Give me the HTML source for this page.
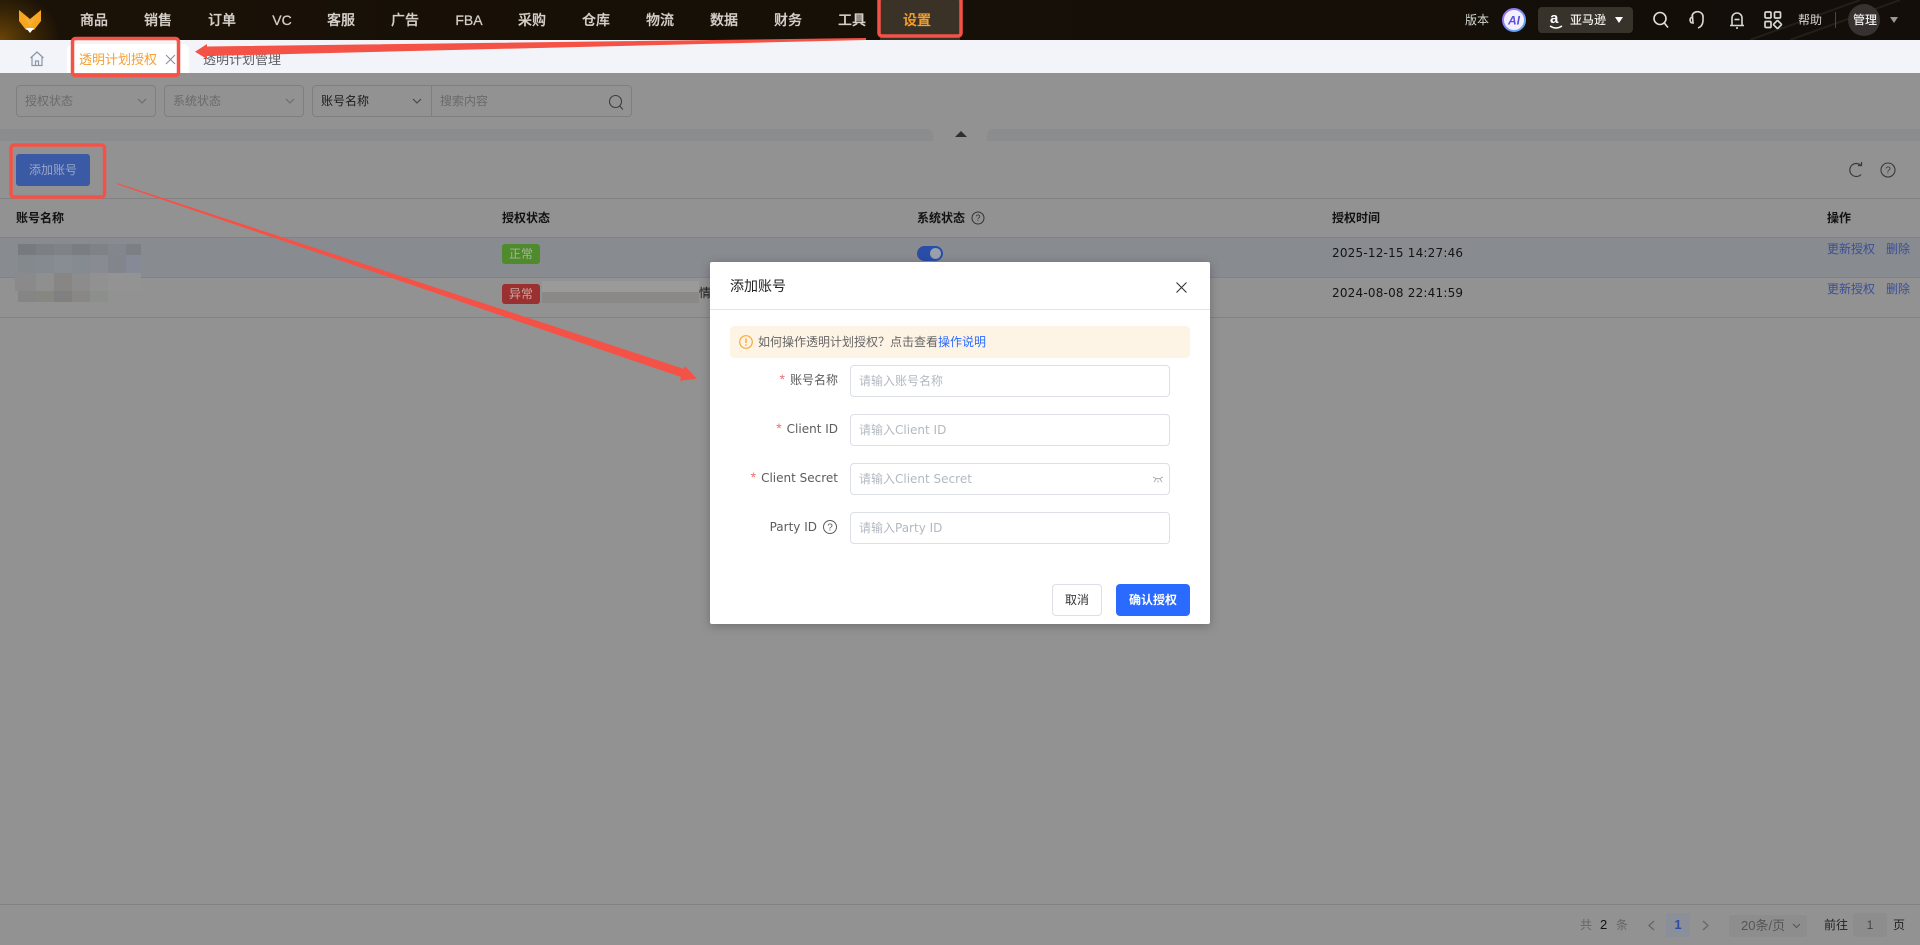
<!DOCTYPE html>
<html lang="zh-CN">
<head>
<meta charset="utf-8">
<title>透明计划授权</title>
<style>
*{box-sizing:border-box;margin:0;padding:0}
html,body{width:1920px;height:945px;overflow:hidden;background:#929292}
body{position:relative;font-family:"Liberation Sans","Noto Sans CJK SC",sans-serif;font-size:12px;color:#222}
.a{position:absolute;white-space:nowrap}
.t{position:absolute;white-space:nowrap;line-height:18px}
#top{left:0;top:0;width:1920px;height:40px;background:radial-gradient(ellipse 60px 50px at 0 40px,#6a4508 0,#3a2606 55%,rgba(23,16,8,0) 100%),linear-gradient(90deg,#1b1207,#171007 30%,#150f08 70%,#130e0a)}
.nav{position:absolute;top:10px;transform:translateX(-50%);font-size:14px;line-height:20px;color:#d4d0c9;font-weight:500;white-space:nowrap;-webkit-text-stroke:.25px currentColor}
.sel{position:absolute;top:85px;height:32px;border:1px solid #7f7f7f;border-radius:4px;background:#929292;line-height:30px;padding-left:8px;color:#6a6a6a}
.th{position:absolute;top:209px;font-weight:700;color:#111;line-height:18px}
.line{position:absolute;left:0;width:1920px;height:1px;background:#828282}
.tag{position:absolute;left:502px;width:38px;height:20px;border-radius:3px;text-align:center;line-height:20px;color:#a7b4a0}
.date{position:absolute;left:1332px;color:#141414;font-family:"DejaVu Sans","Noto Sans CJK SC",sans-serif;font-size:12px;line-height:18px;white-space:nowrap;letter-spacing:.2px}
.link{position:absolute;color:#3a4f98;line-height:18px;white-space:nowrap}
.m{position:absolute;height:18px}
#modal{left:710px;top:262px;width:500px;height:362px;background:#fff;border-radius:2px;box-shadow:0 2px 10px rgba(0,0,0,.25)}
.lab{position:absolute;right:372px;font-family:"DejaVu Sans","Noto Sans CJK SC",sans-serif;font-size:12px;color:#5c5c5c;line-height:18px;white-space:nowrap}
.lab i{font-style:normal;color:#f56c6c;margin-right:5px;font-size:14px;font-family:"Liberation Sans",sans-serif}
.inp{position:absolute;left:140px;width:320px;height:32px;border:1px solid #dcdfe6;border-radius:4px;padding-left:8px;line-height:30px;font-family:"DejaVu Sans","Noto Sans CJK SC",sans-serif;font-size:12px;color:#b3b9c1;white-space:nowrap}
svg{position:absolute;overflow:visible}
</style>
</head>
<body>

<!-- top bar -->
<div class="a" id="top"></div>
<svg style="left:0;top:0" width="1920" height="40"><path d="M1750 40L1860 0M1790 40L1900 0" stroke="#241e18" stroke-width="2" fill="none"/></svg>
<svg style="left:0;top:0" width="60" height="40">
  <polygon points="19,10 30,19 41,10 41,21 34,30 26,30 19,21" fill="#f7a421"/>
  <polygon points="23,15 30,21 37,15 30,27" fill="#f9b02e"/>
  <polygon points="26,28 34,28 30,33" fill="#fff"/>
</svg>
<div class="a" style="left:880px;top:0;width:80px;height:40px;background:#3a3226"></div>
<span class="nav" style="left:94px">商品</span>
<span class="nav" style="left:158px">销售</span>
<span class="nav" style="left:222px">订单</span>
<span class="nav" style="left:282px">VC</span>
<span class="nav" style="left:341px">客服</span>
<span class="nav" style="left:405px">广告</span>
<span class="nav" style="left:469px">FBA</span>
<span class="nav" style="left:532px">采购</span>
<span class="nav" style="left:596px">仓库</span>
<span class="nav" style="left:660px">物流</span>
<span class="nav" style="left:724px">数据</span>
<span class="nav" style="left:788px">财务</span>
<span class="nav" style="left:852px">工具</span>
<span class="nav" style="left:917px;color:#f6a02d">设置</span>

<span class="t" style="left:1465px;top:11px;color:#d5d8d2">版本</span>
<svg style="left:1502px;top:8px" width="24" height="24">
  <defs><linearGradient id="g" x1="0" y1="0" x2="1" y2="1"><stop offset="0" stop-color="#a46bf5"/><stop offset="1" stop-color="#4fb2f5"/></linearGradient></defs>
  <circle cx="12" cy="12" r="11" fill="#f4f0ff" stroke="url(#g)" stroke-width="2"/>
  <text x="12" y="16.5" text-anchor="middle" font-family="Liberation Sans" font-size="12" font-weight="700" font-style="italic" fill="#5b52d8">AI</text>
</svg>
<div class="a" style="left:1538px;top:7px;width:95px;height:26px;background:#37322a;border-radius:4px"></div>
<span class="a" style="left:1550px;top:10px;font-size:15px;line-height:18px;color:#fff;font-weight:700">a</span>
<svg style="left:1548px;top:25px" width="16" height="6"><path d="M2 1Q8 5 14 1" stroke="#fff" stroke-width="1.4" fill="none"/></svg>
<span class="t" style="left:1570px;top:11px;color:#f1efe9;font-weight:500">亚马逊</span>
<svg style="left:1615px;top:17px" width="9" height="7"><polygon points="0,0 8,0 4,6" fill="#fff"/></svg>
<svg style="left:1652px;top:11px" width="18" height="18" fill="none" stroke="#e0dfdb" stroke-width="1.6"><circle cx="8" cy="7.5" r="6"/><path d="M12.3 12l3.7 4.5"/></svg>
<svg style="left:1688px;top:11px" width="18" height="18" fill="none" stroke="#d8d7d2" stroke-width="1.6"><path d="M4 5A5.5 5 0 0 1 15 6.5V10Q14.5 15.5 10 17"/><path d="M4.5 5.5Q.5 8 3 11.5L5 12Z"/></svg>
<svg style="left:1728px;top:11px" width="18" height="19" fill="none" stroke="#d8d7d2" stroke-width="1.6"><path d="M2 14.5h14M4 14V7a5 5 0 0 1 10 0v7"/><path d="M6.5 8.5h5"/><path d="M8 17h2"/></svg>
<svg style="left:1764px;top:11px" width="18" height="18" fill="none" stroke="#d8d7d2" stroke-width="1.7"><rect x="1" y="1" width="6" height="6" rx="1"/><rect x="10.5" y="1" width="6" height="6" rx="1"/><rect x="1" y="10.5" width="6" height="6" rx="1"/><rect x="10.5" y="10.5" width="6" height="6" rx="1" transform="rotate(45 13.5 13.5) scale(1)"/></svg>
<span class="t" style="left:1798px;top:11px;color:#d5d3ce">帮助</span>
<div class="a" style="left:1835px;top:12px;width:1px;height:16px;background:#4a4640"></div>
<div class="a" style="left:1848px;top:4px;width:32px;height:32px;border-radius:50%;background:#37322f"></div>
<span class="a" style="left:1853px;top:11px;font-size:12px;line-height:18px;color:#eee;font-weight:500">管理</span>
<svg style="left:1890px;top:17px" width="9" height="7"><polygon points="0,0 8,0 4,6" fill="#9a9894"/></svg>

<!-- tab bar -->
<div class="a" style="left:0;top:40px;width:1920px;height:33px;background:#f3f4f9"></div>
<div class="a" style="left:67px;top:44px;width:122px;height:29px;background:#fff;border-radius:6px 6px 0 0"></div>
<svg style="left:29px;top:51px" width="16" height="16" fill="none" stroke="#8b97a6" stroke-width="1.2"><path d="M1.5 7L8 1l6.5 6M3 6v8.5h10V6"/><path d="M6.5 14.5V10h3v4.5"/></svg>
<span class="a" style="left:79px;top:51px;font-size:13px;line-height:18px;color:#f5a030">透明计划授权</span>
<svg style="left:166px;top:55px" width="9" height="9" stroke="#8a8f99" stroke-width="1.1"><path d="M0 0L9 9M9 0L0 9"/></svg>
<span class="a" style="left:203px;top:51px;font-size:13px;line-height:18px;color:#5d6066">透明计划管理</span>

<!-- filters -->
<div class="sel" style="left:16px;width:140px">授权状态</div>
<svg style="left:137px;top:98px" width="10" height="7" fill="none" stroke="#6a6a6a" stroke-width="1.1"><path d="M1 1l4 4 4-4"/></svg>
<div class="sel" style="left:164px;width:140px">系统状态</div>
<svg style="left:285px;top:98px" width="10" height="7" fill="none" stroke="#6a6a6a" stroke-width="1.1"><path d="M1 1l4 4 4-4"/></svg>
<div class="sel" style="left:312px;width:320px;color:#1c1c1c">账号名称</div>
<div class="a" style="left:431px;top:86px;width:1px;height:30px;background:#7f7f7f"></div>
<svg style="left:412px;top:98px" width="10" height="7" fill="none" stroke="#444" stroke-width="1.1"><path d="M1 1l4 4 4-4"/></svg>
<span class="t" style="left:440px;top:92px;color:#6a6a6a">搜索内容</span>
<svg style="left:608px;top:94px" width="16" height="17" fill="none" stroke="#3d3d3d" stroke-width="1.1"><circle cx="7.5" cy="7.5" r="6"/><path d="M11.8 12l3 3.5"/></svg>

<!-- collapse strip -->
<div class="a" style="left:0;top:129px;width:933px;height:12px;background:#8b8c8e;border-radius:0 6px 0 0"></div>
<div class="a" style="left:987px;top:129px;width:933px;height:12px;background:#8b8c8e;border-radius:6px 0 0 0"></div>
<svg style="left:955px;top:131px" width="12" height="6"><polygon points="0,6 12,6 6,0" fill="#2f2f2f"/></svg>

<!-- toolbar -->
<div class="a" style="left:16px;top:154px;width:74px;height:32px;background:#3b5aa5;border-radius:3px;text-align:center;line-height:32px;color:#9aa6c4">添加账号</div>
<svg style="left:1847px;top:161px" width="18" height="18" fill="none" stroke="#3a3a3a" stroke-width="1.2"><path d="M14 4.5A6.5 6.5 0 1 0 14 13.5"/><path d="M11 4.5h3.5V1"/></svg>
<svg style="left:1880px;top:162px" width="16" height="16" fill="none" stroke="#3a3a3a" stroke-width="1.1"><circle cx="8" cy="8" r="7"/><text x="8" y="11.5" text-anchor="middle" font-family="Liberation Sans" font-size="10" fill="#3a3a3a" stroke="none">?</text></svg>

<!-- table -->
<div class="line" style="top:198px"></div>
<div class="a" style="left:0;top:237px;width:1920px;height:40px;background:#888b90"></div>
<div class="line" style="top:237px"></div>
<div class="line" style="top:277px"></div>
<div class="line" style="top:317px"></div>
<span class="th" style="left:16px">账号名称</span>
<span class="th" style="left:502px">授权状态</span>
<span class="th" style="left:917px">系统状态</span>
<svg style="left:971px;top:211px" width="14" height="14" fill="none" stroke="#333" stroke-width="1"><circle cx="7" cy="7" r="6"/><text x="7" y="10.2" text-anchor="middle" font-family="Liberation Sans" font-size="9" fill="#333" stroke="none">?</text></svg>
<span class="th" style="left:1332px">授权时间</span>
<span class="th" style="left:1827px">操作</span>

<!-- mosaic 1 -->
<svg style="left:0;top:0" width="160" height="320" shape-rendering="crispEdges">
  <g>
    <rect x="18" y="244" width="18" height="11" fill="#777b80"/><rect x="36" y="244" width="18" height="11" fill="#7c8084"/><rect x="54" y="244" width="18" height="11" fill="#7f8387"/><rect x="72" y="244" width="18" height="11" fill="#7a7e83"/><rect x="90" y="244" width="18" height="11" fill="#7f8388"/><rect x="108" y="244" width="18" height="11" fill="#83868c"/><rect x="126" y="244" width="15" height="11" fill="#7c8085"/>
    <rect x="18" y="255" width="18" height="22" fill="#84898e"/><rect x="36" y="255" width="18" height="22" fill="#858a90"/><rect x="54" y="255" width="18" height="22" fill="#888d93"/><rect x="72" y="255" width="18" height="22" fill="#868b91"/><rect x="90" y="255" width="18" height="22" fill="#888c92"/><rect x="108" y="255" width="18" height="22" fill="#82868c"/><rect x="126" y="255" width="15" height="22" fill="#868a96"/>
    <rect x="15" y="273" width="21" height="18" fill="#8a8a8a"/><rect x="36" y="273" width="18" height="18" fill="#8f8f8f"/><rect x="54" y="273" width="18" height="18" fill="#878685"/><rect x="72" y="273" width="18" height="18" fill="#8c8c8c"/><rect x="90" y="273" width="18" height="18" fill="#919191"/><rect x="108" y="273" width="33" height="18" fill="#939393"/>
    <rect x="18" y="291" width="18" height="11" fill="#858585"/><rect x="36" y="291" width="18" height="11" fill="#878782"/><rect x="54" y="291" width="18" height="11" fill="#808080"/><rect x="72" y="291" width="18" height="11" fill="#888786"/><rect x="90" y="291" width="18" height="11" fill="#8d8f8d"/>
  </g>
</svg>

<div class="tag" style="top:244px;background:#4f8a2c">正常</div>
<div class="tag" style="top:284px;background:#9a3030;color:#c9a8a4">异常</div>
<div class="a" style="left:542px;top:281px;width:157px;height:11px;background:#9a9a9a"></div>
<div class="a" style="left:542px;top:292px;width:157px;height:11px;background:#8a8987"></div>
<span class="a" style="left:699px;top:284px;line-height:18px;color:#1c1c1c">情</span>

<div class="a" style="left:917px;top:246px;width:26px;height:15px;border-radius:8px;background:#2a4da8"></div>
<div class="a" style="left:930px;top:248px;width:11px;height:11px;border-radius:50%;background:#9aa0ab"></div>

<span class="date" style="top:244px">2025-12-15 14:27:46</span>
<span class="date" style="top:284px">2024-08-08 22:41:59</span>
<span class="link" style="left:1827px;top:240px">更新授权</span>
<span class="link" style="left:1886px;top:240px">删除</span>
<span class="link" style="left:1827px;top:280px">更新授权</span>
<span class="link" style="left:1886px;top:280px">删除</span>

<!-- pagination -->
<div class="line" style="top:904px"></div>
<span class="t" style="left:1580px;top:916px;color:#666;font-size:12px">共</span>
<span class="t" style="left:1600px;top:916px;color:#111;font-size:13px">2</span>
<span class="t" style="left:1616px;top:916px;color:#666;font-size:12px">条</span>
<svg style="left:1647px;top:920px" width="8" height="11" fill="none" stroke="#666" stroke-width="1.3"><path d="M7 1L2 5.5 7 10"/></svg>
<div class="a" style="left:1666px;top:913px;width:24px;height:24px;background:#8a8f99;text-align:center;line-height:24px;color:#2a4da8;font-weight:700;font-size:13px">1</div>
<svg style="left:1702px;top:920px" width="8" height="11" fill="none" stroke="#666" stroke-width="1.3"><path d="M1 1l5 4.5L1 10"/></svg>
<div class="a" style="left:1729px;top:915px;width:78px;height:22px;background:#8d8d8d;border-radius:3px;line-height:22px;padding-left:12px;color:#555;font-size:13px">20条/页</div>
<svg style="left:1792px;top:923px" width="9" height="6" fill="none" stroke="#555" stroke-width="1.1"><path d="M1 1l3.5 3.5L8 1"/></svg>
<span class="t" style="left:1824px;top:916px;color:#222">前往</span>
<div class="a" style="left:1853px;top:913px;width:34px;height:24px;background:#8d8d8d;border-radius:3px;text-align:center;line-height:24px;color:#444">1</div>
<span class="t" style="left:1893px;top:916px;color:#222">页</span>

<!-- modal -->
<div class="a" id="modal">
  <span class="a" style="left:20px;top:14px;font-size:14px;line-height:20px;color:#222">添加账号</span>
  <svg style="left:466px;top:20px" width="11" height="11" stroke="#333" stroke-width="1.1"><path d="M0.5 0.5L10.5 10.5M10.5 0.5L0.5 10.5"/></svg>
  <div class="a" style="left:0;top:47px;width:500px;height:1px;background:#e2e4e8"></div>
  <div class="a" style="left:20px;top:64px;width:460px;height:32px;background:#fef4e6;border-radius:4px"></div>
  <svg style="left:29px;top:73px" width="14" height="14" fill="none" stroke="#f7a93b" stroke-width="1.2"><circle cx="7" cy="7" r="6.3"/><path d="M7 3.4v4.6M7 9.4v1.2" stroke-width="1.4"/></svg>
  <span class="a" style="left:48px;top:71px;line-height:18px;color:#666">如何操作透明计划授权&#xFF1F;点击查看<span style="color:#2a6bff">操作说明</span></span>

  <span class="lab" style="top:108px"><i>*</i>账号名称</span>
  <div class="inp" style="top:103px">请输入账号名称</div>
  <span class="lab" style="top:157px"><i>*</i>Client ID</span>
  <div class="inp" style="top:152px">请输入Client ID</div>
  <span class="lab" style="top:206px"><i>*</i>Client Secret</span>
  <div class="inp" style="top:201px">请输入Client Secret</div>
  <svg style="left:443px;top:214px" width="10" height="7" fill="none" stroke="#a5abb1" stroke-width="1"><path d="M0 1Q5 4.5 10 1M1 6L3 3M9 6L7 3M5 6.5V4.5"/></svg>
  <span class="lab" style="top:256px;right:393px">Party ID</span>
  <svg style="left:113px;top:258px" width="14" height="14" fill="none" stroke="#5c5c5c" stroke-width="1"><circle cx="7" cy="7" r="6.5"/><text x="7" y="10.5" text-anchor="middle" font-family="Liberation Sans" font-size="10" fill="#5c5c5c" stroke="none">?</text></svg>
  <div class="inp" style="top:250px">请输入Party ID</div>

  <div class="a" style="left:342px;top:322px;width:50px;height:32px;border:1px solid #dcdfe6;border-radius:4px;text-align:center;line-height:30px;color:#333">取消</div>
  <div class="a" style="left:406px;top:322px;width:74px;height:32px;background:#2a6aff;border-radius:4px;text-align:center;line-height:32px;color:#fff;font-weight:700">确认授权</div>
</div>

<!-- red annotations -->
<svg style="left:0;top:0;z-index:5" width="1920" height="945">
  <g fill="none" stroke="#f55247" stroke-width="3.5">
    <rect x="879" y="-2" width="82" height="38" rx="3"/>
    <rect x="72.5" y="38.5" width="106" height="37" rx="3"/>
    <rect x="11" y="145" width="93.5" height="52" rx="3"/>
  </g>
  <g fill="#f55247">
    <polygon points="195,51.7 207,44 207,46.5 866,38 866,40 207,56 207,59"/>
    <polygon points="117,183 118,184.5 681,377 680,380.7 696.7,378.7 685,366 684,369"/>
  </g>
</svg>

</body>
</html>
